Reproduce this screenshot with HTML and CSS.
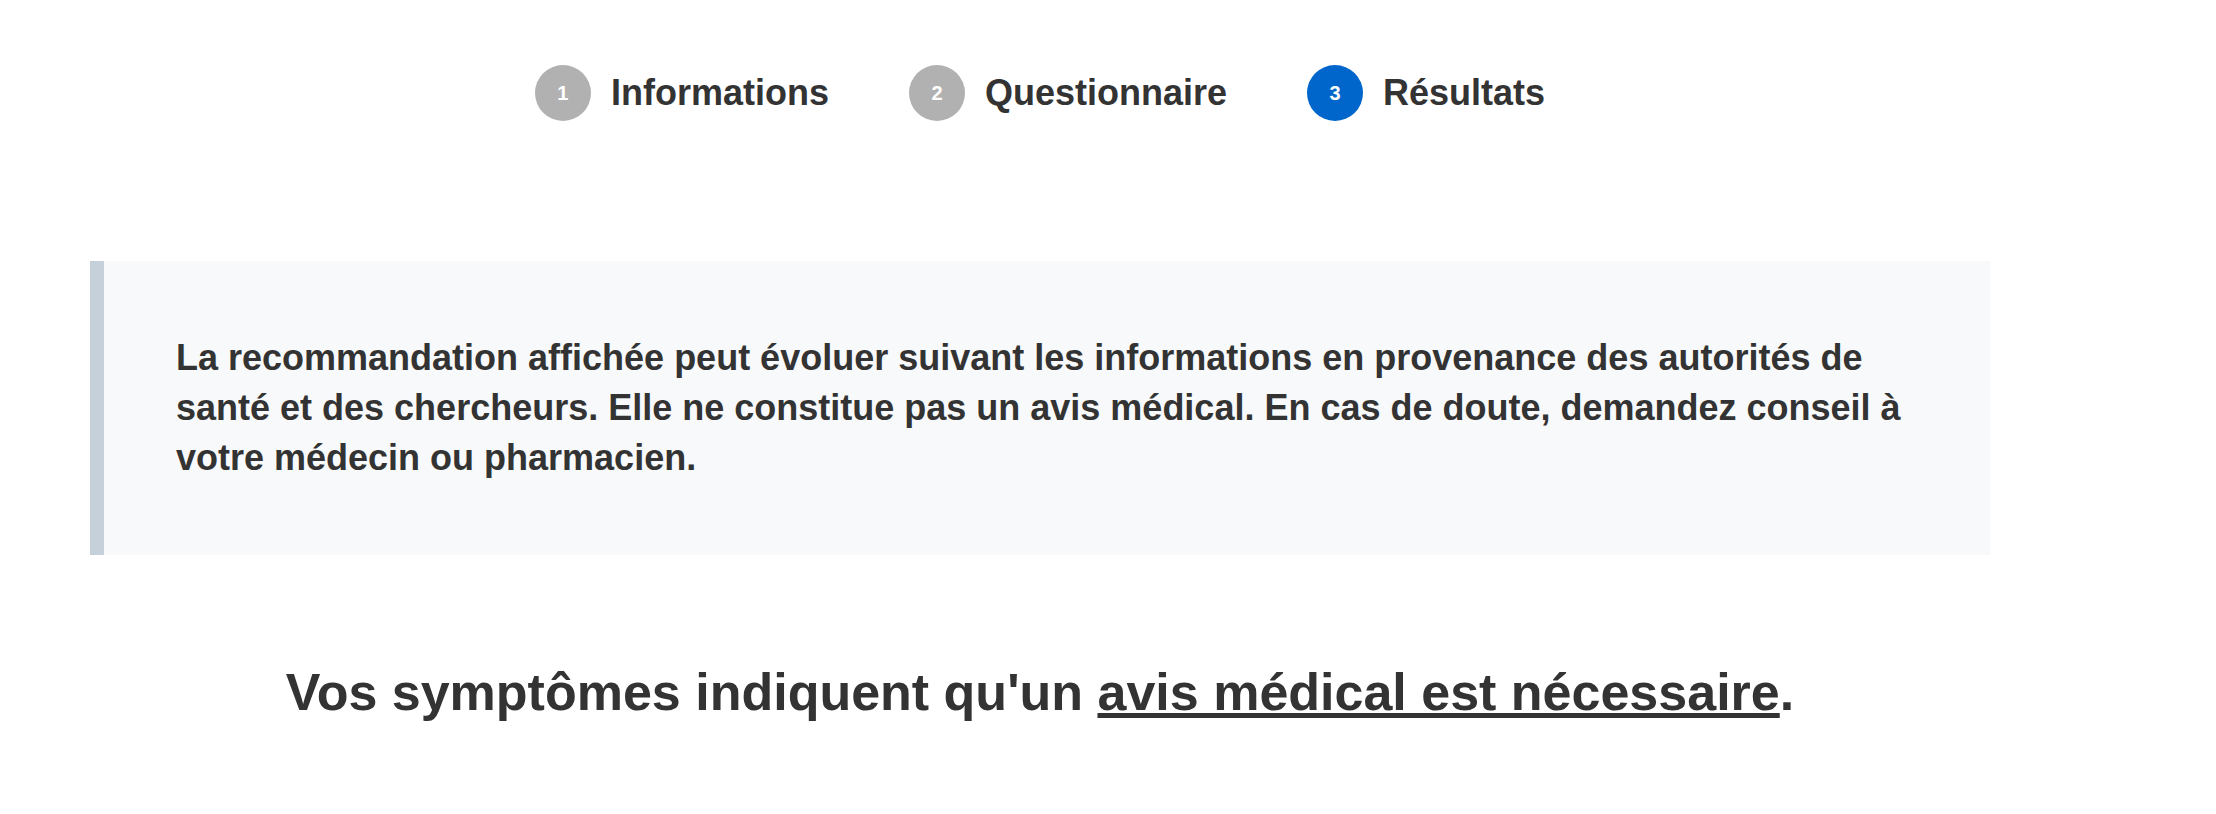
FILE: index.html
```html
<!DOCTYPE html>
<html lang="fr">
<head>
<meta charset="utf-8">
<title>Résultats</title>
<link rel="stylesheet" href="styles.css">
</head>
<body>
<main class="container">
  <ol class="stepper">
    <li class="step"><span class="step-num">1</span><span class="step-label">Informations</span></li>
    <li class="step"><span class="step-num">2</span><span class="step-label">Questionnaire</span></li>
    <li class="step step-active"><span class="step-num">3</span><span class="step-label">Résultats</span></li>
  </ol>
  <div class="notice">
    <p>La recommandation affichée peut évoluer suivant les informations en provenance des autorités de santé et des chercheurs. Elle ne constitue pas un avis médical. En cas de doute, demandez conseil à votre médecin ou pharmacien.</p>
  </div>
  <h1 class="result">Vos symptômes indiquent qu'un <span class="result-key">avis médical est nécessaire</span>.</h1>
</main>
</body>
</html>
```
FILE: styles.css
```css
html, body {
  margin: 0;
  padding: 0;
  background: #ffffff;
}
body {
  font-family: "Liberation Sans", Arial, sans-serif;
  color: #333333;
}
.container {
  width: 1900px;
  margin: 0 0 0 90px;
}
.stepper {
  list-style: none;
  margin: 65px 0 0 0;
  padding: 0;
  display: flex;
  justify-content: center;
  align-items: center;
  gap: 80px;
  height: 56px;
}
.step {
  display: flex;
  align-items: center;
  gap: 20px;
}
.step-num {
  width: 56px;
  height: 56px;
  border-radius: 50%;
  background: #b1b1b1;
  color: #ffffff;
  font-weight: 700;
  font-size: 20px;
  display: flex;
  align-items: center;
  justify-content: center;
}
.step-active .step-num {
  background: #0066cc;
}
.step-label {
  font-size: 36px;
  font-weight: 700;
  color: #333333;
}
.notice {
  margin-top: 140px;
  background: #f8f9fa;
  border-left: 14px solid #c6d0db;
  padding: 72px 72px;
}
.notice p {
  margin: 0;
  font-size: 36px;
  line-height: 50px;
  font-weight: 700;
  color: #333333;
}
.result {
  margin: 106px 0 0 0;
  text-align: center;
  font-size: 52px;
  line-height: 1.2;
  font-weight: 700;
  color: #333333;
}
.result-key {
  text-decoration: underline;
}
```
